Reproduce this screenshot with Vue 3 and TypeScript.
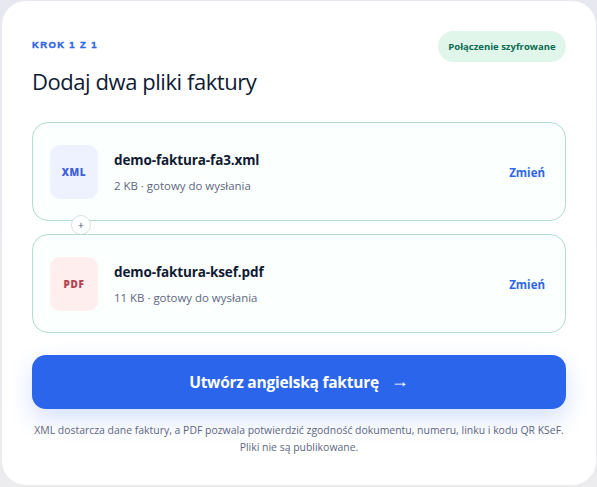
<script setup lang="ts">
interface FileItem { badge: string; kind: string; name: string; meta: string }
const files: FileItem[] = [
  { badge: 'XML', kind: 'xml', name: 'demo-faktura-fa3.xml', meta: '2 KB · gotowy do wysłania' },
  { badge: 'PDF', kind: 'pdf', name: 'demo-faktura-ksef.pdf', meta: '11 KB · gotowy do wysłania' },
]
</script>

<template>
  <main class="page">
    <section class="card">
      <header class="head">
        <div>
          <p class="step">KROK 1 Z 1</p>
          <h1 class="title">Dodaj dwa pliki faktury</h1>
        </div>
        <span class="secure">Połączenie szyfrowane</span>
      </header>
      <div class="files">
        <article v-for="(f, i) in files" :key="f.name" class="file">
          <div class="badge" :class="f.kind">{{ f.badge }}</div>
          <div class="info">
            <div class="name">{{ f.name }}</div>
            <div class="meta">{{ f.meta }}</div>
          </div>
          <a class="change">Zmień</a>
          <span v-if="i === 0" class="plus">+</span>
        </article>
      </div>
      <button class="submit"><span>Utwórz angielską fakturę</span><span class="arrow">→</span></button>
      <p class="note">XML dostarcza dane faktury, a PDF pozwala potwierdzić zgodność dokumentu, numeru, linku i kodu QR KSeF.<br>Pliki nie są publikowane.</p>
    </section>
  </main>
</template>

<style>
html, body { margin: 0; background: #ececf2; }
</style>

<style scoped>
.page {
  width: 597px; height: 487px; box-sizing: border-box; padding: 1px 1px 2px 2px;
  background: linear-gradient(180deg, #e8e8f1 0%, #ececef 100%);
  font-family: "Open Sans", sans-serif; overflow: hidden;
}
.card {
  height: 484px; box-sizing: border-box; background: #fff; border-radius: 24px;
  padding: 30px 30px 0;
}
.head { display: flex; justify-content: space-between; align-items: flex-start; }
.step {
  margin: 8px 0 0; font-family: "Liberation Sans", sans-serif; font-size: 9.5px; line-height: 11px; font-weight: 700;
  letter-spacing: 1.35px; color: #2f66ea; -webkit-text-stroke: .4px #2f66ea;
}
.title { margin: 15px 0 0; font-size: 22px; line-height: 32px; font-weight: 400; color: #101a33; letter-spacing: -.44px; }
.secure {
  height: 31px; line-height: 31px; padding: 0 10.5px; border-radius: 16px; background: #e1f6ea;
  color: #0b6a52; font-size: 9.5px; font-weight: 700;
}
.files { display: flex; flex-direction: column; gap: 13px; margin-top: 25px; }
.file {
  position: relative; height: 99px; box-sizing: border-box; border: 1px solid #b2dccb; border-radius: 16px;
  background: #fbfffe; display: flex; align-items: center; padding: 0 20px 0 17px;
}
.badge {
  width: 48px; height: 54px; border-radius: 10px; display: flex; align-items: center; justify-content: center;
  font-size: 10px; font-weight: 800; letter-spacing: .6px;
}
.xml { background: #eef2fe; color: #3f5fdc; }
.pdf { background: #ffeeee; color: #b4434f; }
.info { flex: 1; margin-left: 16px; }
.name { font-size: 13.5px; line-height: 20px; font-weight: 700; color: #101a33; letter-spacing: -.12px; }
.meta { margin-top: 8px; font-size: 11.45px; line-height: 16px; color: #5d6780; }
.change { font-size: 11.5px; font-weight: 700; color: #2f66ea; margin-top: 2px; }
.plus {
  position: absolute; left: 38px; bottom: -15px; width: 18px; height: 18px; border: 1px solid #d7dfe3; border-radius: 50%;
  background: #fff; font-size: 11px; line-height: 18px; text-align: center; color: #4d5670;
}
.submit {
  display: flex; width: 100%; height: 54px; margin-top: 22px; align-items: center; justify-content: center; gap: 12px;
  border: 0; border-radius: 14px; background: #2b65ec; color: #fff; font-family: inherit; font-size: 15.5px; font-weight: 700; letter-spacing: -.25px;
  box-shadow: 0 10px 24px rgba(43, 101, 236, .2);
}
.arrow { font-weight: 400; font-size: 18px; line-height: 20px; letter-spacing: 0; margin-bottom: 4px; }
.note { margin: 13px 0 0; font-size: 10.45px; line-height: 17px; color: #5d6780; text-align: center; }
</style>
